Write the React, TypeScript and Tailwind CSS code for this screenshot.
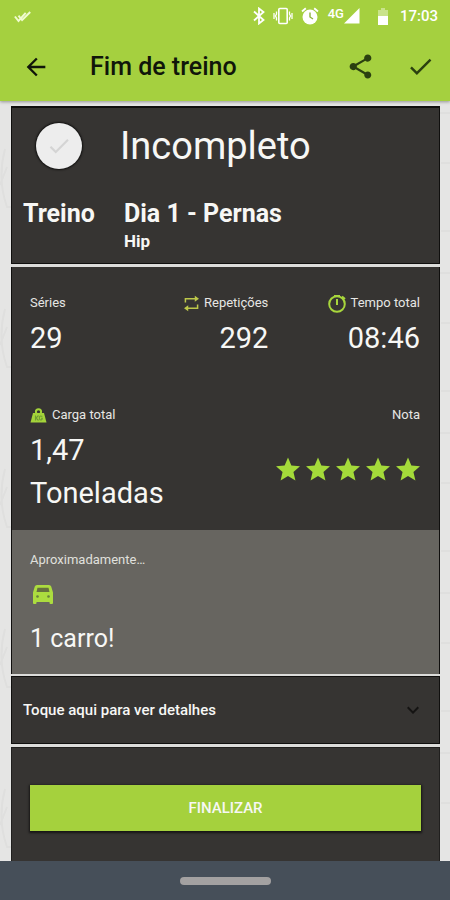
import type { ReactNode } from "react";
import { MdArrowBack, MdCheck, MdKeyboardArrowDown, MdShare } from "react-icons/md";

function DoubleCheckIcon() {
  return (
    <svg width="18" height="13" viewBox="0 0 20 14" fill="none" stroke="#f0fbd0" strokeWidth="2.200" aria-hidden="true">
      <path d="M1 7l4 5 8-9M5 6l4 5 9-9" />
    </svg>
  );
}

function BluetoothIcon() {
  return (
    <svg width="12" height="18" viewBox="0 0 12 18" fill="none" stroke="currentColor" strokeWidth="1.800" aria-hidden="true">
      <path d="M1 4.500l9.500 8.500L6 16.500v-15L10.500 5 1 13.500" />
    </svg>
  );
}

function VibrationIcon() {
  return (
    <svg width="20" height="18" viewBox="0 0 20 18" fill="none" stroke="currentColor" strokeWidth="1.600" aria-hidden="true">
      <rect x="5.800" y="1.500" width="8.400" height="15" rx="1" />
      <path d="M3.500 4.500v2.500L2.500 9l1 2v2.500M1 6v6M16.500 4.500v2.500l1 2-1 2v2.500M19 6v6" strokeWidth="1.300" />
    </svg>
  );
}

function AlarmIcon() {
  return (
    <svg width="18" height="18" viewBox="0 0 18 18" aria-hidden="true">
      <circle cx="9" cy="10" r="7.500" fill="currentColor" />
      <path d="M1 4.500l3.800-3.300M17 4.500l-3.800-3.300" stroke="currentColor" strokeWidth="1.800" />
      <path d="M9 5.500V10l3 2" fill="none" stroke="#8db33a" strokeWidth="1.400" />
    </svg>
  );
}

function SignalIcon() {
  return (
    <svg width="16" height="16" viewBox="0 0 16 16" fill="currentColor" aria-hidden="true">
      <path d="M0 15.500L15.500 0v15.500z" />
    </svg>
  );
}

function BatteryIcon() {
  return (
    <svg width="10" height="17" viewBox="0 0 10 17" fill="currentColor" aria-hidden="true">
      <path d="M3 0h4v2h3v7H0V2h3z" opacity="0.4" />
      <path d="M0 8h10v9H0z" />
    </svg>
  );
}

function RepeatIcon() {
  return (
    <svg width="15" height="17" viewBox="0 0 16 18" className="text-[#bdc84a]" aria-hidden="true">
      <path d="M1.500 8V4H12M14.500 10v4H4" fill="none" stroke="currentColor" strokeWidth="1.600" />
      <path d="M11.500 0.800L16 4l-4.500 3.200zM4.500 10.800L0 14l4.500 3.200z" fill="currentColor" />
    </svg>
  );
}

function TimerIcon() {
  return (
    <svg width="18" height="19" viewBox="0 0 18 19" fill="none" stroke="#a8d63c" strokeWidth="2" aria-hidden="true">
      <circle cx="9" cy="10" r="7.800" />
      <path d="M9 5v6M6 2h6M14 2.500l3 2.500" />
    </svg>
  );
}

function WeightIcon() {
  return (
    <svg width="17" height="15" viewBox="0 0 16 15" aria-hidden="true">
      <circle cx="8" cy="3.800" r="2.600" fill="none" stroke="#a4d33a" strokeWidth="2" />
      <path d="M2.500 5h11l2.500 9.500H0z" fill="#a4d33a" />
      <path
        d="M5 7.500v5M8 7.500L5.500 10 8 12.500M11.800 8.500c-2.500-1.500-3.300.500-2.800 2.500.800 1.800 2.800 1 2.800-.700h-1.200"
        fill="none"
        stroke="#6f9c33"
        strokeWidth="1.100"
      />
    </svg>
  );
}

function CarIcon() {
  return (
    <svg width="20" height="19" viewBox="0 0 20 19" aria-hidden="true">
      <path
        d="M4 0h12q1.700 0 2.200 1.500L20 7.500V18q0 1-1 1h-1.500q-1 0-1-1v-1h-13v1q0 1-1 1H1q-1 0-1-1V7.500l1.800-6Q2.300 0 4 0z"
        fill="#acdc3f"
      />
      <path d="M4.500 2.800h11l1 4.200h-13z" fill="#66703f" />
      <circle cx="4.500" cy="11.500" r="1.300" fill="#66803c" />
      <circle cx="15.500" cy="11.500" r="1.300" fill="#66803c" />
    </svg>
  );
}

function Star() {
  return (
    <svg width="24" height="24" viewBox="2 2 20 19" fill="#a4da3a" aria-hidden="true">
      <path d="M12 17.270L18.180 21l-1.640-7.030L22 9.240l-7.190-.610L12 2 9.190 8.630 2 9.240l5.460 4.730L5.820 21z" />
    </svg>
  );
}

function Label({ icon, children }: { icon?: ReactNode; children: ReactNode }) {
  return (
    <dt className="flex h-5 items-center gap-[5px] text-[13px] leading-5 whitespace-nowrap text-[#e6e6e4]">
      {icon}
      {children}
    </dt>
  );
}

function Stat({ label, value, icon, end }: { label: string; value: string; icon?: ReactNode; end?: boolean }) {
  return (
    <div className={end ? "flex flex-col items-end gap-1" : "flex flex-col gap-1"}>
      <Label icon={icon}>{label}</Label>
      <dd className="text-[29px] leading-[43px]">{value}</dd>
    </div>
  );
}

function Texture() {
  return (
    <svg className="absolute inset-0 h-full w-full" fill="none" stroke="#dfdfde" strokeWidth="2" aria-hidden="true">
      <defs>
        <pattern id="paper" width="450" height="160" patternUnits="userSpaceOnUse">
          <path d="M5 48q-8 30 2 58h5M0 84l7-18M440 12h10M441 62h9M441 130h9" />
        </pattern>
      </defs>
      <rect width="100%" height="100%" fill="url(#paper)" stroke="none" />
    </svg>
  );
}

export default function App() {
  return (
    <div className="flex min-h-screen flex-col bg-[#e5e5e4] font-[Roboto,sans-serif] text-[#f7f7f5]">
      <header className="relative z-10 bg-[#a5d03f] shadow-[0_1px_3px_rgba(0,0,0,0.35)]">
        <div className="flex h-8 items-center pr-3 pl-[14px] text-white">
          <DoubleCheckIcon />
          <div className="ml-auto flex items-center">
            <BluetoothIcon />
            <span className="mr-2 ml-2">
              <VibrationIcon />
            </span>
            <AlarmIcon />
            <span className="ml-[9px] self-start text-[13px] leading-4 font-medium">4G</span>
            <SignalIcon />
            <span className="mr-3 ml-[18px]">
              <BatteryIcon />
            </span>
            <time className="text-[15px] leading-5 font-medium">17:03</time>
          </div>
        </div>
        <div className="flex h-[69px] items-center pr-[15px] pl-[22px] text-[#10160a]">
          <button type="button" aria-label="Voltar">
            <MdArrowBack size={28} />
          </button>
          <h1 className="ml-10 text-[25px] leading-8 font-medium">Fim de treino</h1>
          <button type="button" aria-label="Compartilhar" className="ml-auto text-[#2b4010]">
            <MdShare size={29} />
          </button>
          <button type="button" aria-label="Confirmar" className="ml-[31px] text-[#2b4010]">
            <MdCheck size={29} />
          </button>
        </div>
      </header>

      <main className="relative flex flex-1 flex-col pt-[5px] pr-[10px] pl-[11px]">
        <Texture />
        <div className="relative flex flex-1 flex-col bg-[#dcdcda]">
          <section className="h-[158px] border border-t-2 border-[#100f0e] bg-[#363432] px-[11px]">
            <div className="flex h-[76px] items-center pl-[13px]">
              <span className="flex size-[46px] items-center justify-center rounded-full bg-[#ededed] text-[#d4d4d4] shadow-[0_0_2px_1px_rgba(0,0,0,0.7)]">
                <MdCheck size={26} />
              </span>
              <h2 className="ml-[38px] text-[38px] leading-[44px]">Incompleto</h2>
            </div>
            <div className="flex pt-[14px] font-bold">
              <p className="w-[101px] text-[25px] leading-[31px]">Treino</p>
              <div>
                <p className="text-[25px] leading-[31px]">Dia 1 - Pernas</p>
                <p className="text-[17px] leading-6">Hip</p>
              </div>
            </div>
          </section>

          <section className="mt-[3px] flex flex-col border-x border-[#100f0e] bg-[#363432]">
            <dl className="flex h-[263px] flex-col justify-between pt-[26px] pr-[19px] pb-[15px] pl-[18px]">
              <div className="grid grid-cols-[4fr_7fr_7fr]">
                <Stat label="Séries" value="29" />
                <Stat label="Repetições" value="292" icon={<RepeatIcon />} end />
                <Stat label="Tempo total" value="08:46" icon={<TimerIcon />} end />
              </div>
              <div className="flex justify-between">
                <div className="flex w-[160px] flex-col gap-1">
                  <Label icon={<WeightIcon />}>Carga total</Label>
                  <dd className="text-[29px] leading-[43px]">1,47 Toneladas</dd>
                </div>
                <div className="flex flex-col items-end">
                  <Label>Nota</Label>
                  <dd className="mt-8 flex gap-[6px]" role="img" aria-label="5 estrelas">
                    <Star />
                    <Star />
                    <Star />
                    <Star />
                    <Star />
                  </dd>
                </div>
              </div>
            </dl>
            <div className="flex h-36 flex-col bg-[#676560] px-[18px] pt-5">
              <p className="text-[13px] leading-5 text-[#e0e0dd]">Aproximadamente…</p>
              <div className="mt-[15px] pl-[3px]">
                <CarIcon />
              </div>
              <p className="mt-[14px] text-[25px] leading-[42px]">1 carro!</p>
            </div>
          </section>

          <button
            type="button"
            className="mt-[2px] flex h-[68px] items-center justify-between border border-[#100f0e] bg-[#363432] pr-[14px] pl-[11px] text-[15px] font-medium"
          >
            Toque aqui para ver detalhes
            <MdKeyboardArrowDown size={24} color="#151413" />
          </button>

          <section className="mt-[3px] flex-1 border-x border-t border-[#201f1e] bg-[#363432] px-[18px] pt-[37px] pb-[30px]">
            <button
              type="button"
              className="h-[46px] w-full bg-[#a5d13d] text-[15px] font-medium shadow-[0_1px_2px_1px_rgba(0,0,0,0.6)]"
            >
              FINALIZAR
            </button>
          </section>
        </div>
      </main>

      <footer className="relative flex h-[39px] items-center justify-center bg-[#464f59]">
        <span className="h-2 w-[91px] rounded-full bg-[#a3a1a1]" />
      </footer>
    </div>
  );
}
